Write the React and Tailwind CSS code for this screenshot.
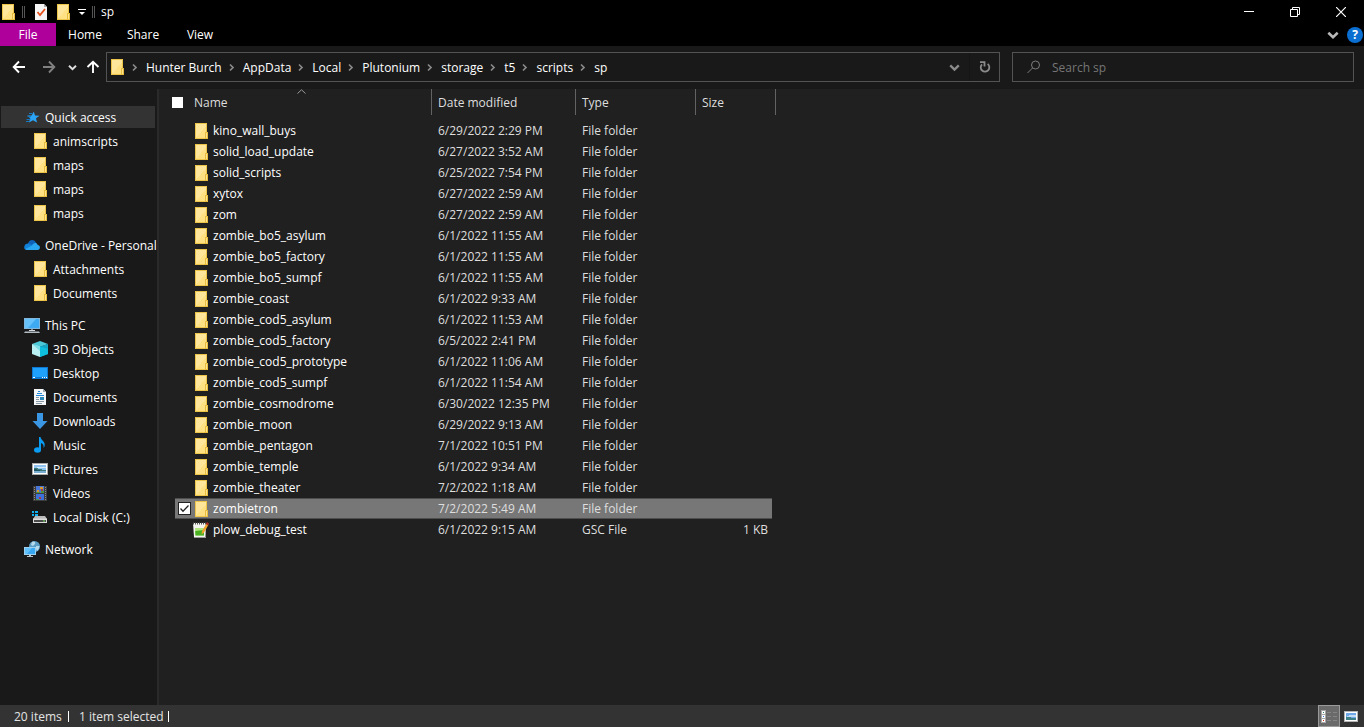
import React, { useState } from "react";

function FolderIcon() {
  return (
    <svg width="16" height="16" viewBox="0 0 16 16" className="shrink-0" shapeRendering="crispEdges" aria-hidden="true">
      <rect x="2" y="0" width="12" height="16" fill="#edc54a" />
      <rect x="3" y="1" width="10" height="14" fill="#ffe69a" />
      <path d="M3 15L13 3V15Z" fill="#ffe082" />
      <rect x="12" y="9" width="3" height="7" fill="#e8bd3f" />
      <rect x="13" y="10" width="1" height="5" fill="#ffe48f" />
    </svg>
  );
}

function CheckedPageIcon() {
  return (
    <svg width="16" height="16" viewBox="0 0 16 16" className="shrink-0" aria-hidden="true">
      <path d="M2 0H11L14 3V16H2Z" fill="#f5f5f5" />
      <path d="M11 0V3H14Z" fill="#a8a8a8" />
      <path d="M4.500 8L7 11L12 5" fill="none" stroke="#e8501c" strokeWidth="1.800" />
    </svg>
  );
}

function StarIcon() {
  return (
    <svg width="16" height="16" viewBox="0 0 16 16" className="shrink-0" aria-hidden="true">
      <path d="M9.800 2.500L11 6.600L15.600 6.800L12 9.300L13 13.600L9 11.200L5 13.600L6.200 9.300L3.200 6.600L7.600 6.400Z" fill="#2ba4f5" />
      <path d="M5 4.500H8M3.500 7.500H7M2.500 10.500H6.500M2 12.500H5" stroke="#1479c4" strokeWidth="1" />
    </svg>
  );
}

function CloudIcon() {
  return (
    <svg width="16" height="16" viewBox="0 0 16 16" className="shrink-0" aria-hidden="true">
      <path d="M4 7C4.600 2.200 10.500 1.600 12.200 6L9 11L2 10Z" fill="#0f62b8" />
      <path d="M.2 10.500C0 7 4.200 5.200 6.500 7.500L10 9L5 13H3C1.200 13 .2 12 .2 10.500Z" fill="#1180d8" />
      <path d="M8 8.500C9 5.600 13 5 13.600 8C16.800 8.200 16.600 13 13.500 13H3.500C2.600 13 1.800 12.600 1.200 12Z" fill="#2aa5ef" />
    </svg>
  );
}

function PcIcon() {
  return (
    <svg width="16" height="16" viewBox="0 0 16 16" className="shrink-0" aria-hidden="true">
      <rect x="0" y="1" width="16" height="11" fill="#7fb8dc" />
      <rect x="1" y="2" width="14" height="9" fill="#3eaaf2" />
      <path d="M1 2H12L4 11H1Z" fill="#68c2fa" />
      <rect x="7" y="12" width="2" height="1" fill="#7b8a96" />
      <path d="M5 13H11V14H5Z" fill="#d3dce3" />
      <path d="M1 14.500H15L16 16H0Z" fill="#b3bcc3" />
    </svg>
  );
}

function CubeIcon() {
  return (
    <svg width="16" height="16" viewBox="0 0 16 16" className="shrink-0" aria-hidden="true">
      <path d="M0 3L8 0L16 3L8 6Z" fill="#4cc9d8" />
      <path d="M0 3L8 5.500V16L0 13Z" fill="#b9f0f3" />
      <path d="M16 3L8 5.500V16L16 13Z" fill="#16a5c4" />
      <path d="M8 5.500L16 8V13L8 16Z" fill="#0fc0de" />
      <path d="M0 3L8 5.500V10Z" fill="#7be0ea" />
    </svg>
  );
}

function DesktopIcon() {
  return (
    <svg width="16" height="16" viewBox="0 0 16 16" className="shrink-0" shapeRendering="crispEdges" aria-hidden="true">
      <rect x="0" y="2" width="16" height="12" fill="#0d79d0" />
      <rect x="1" y="3" width="14" height="9" fill="#1fa0fb" />
      <path d="M1 12h2v1H1zM10 12h1v1h-1zM12 12h1v1h-1zM14 12h1v1h-1z" fill="#fff" />
    </svg>
  );
}

function DocumentsIcon() {
  return (
    <svg width="16" height="16" viewBox="0 0 16 16" className="shrink-0" shapeRendering="crispEdges" aria-hidden="true">
      <path d="M2 0H12L14 3V16H2Z" fill="#f4f6f8" />
      <path d="M11 0V3H14Z" fill="#9aa5ad" />
      <path d="M6 2h2v1H6zM5 4h5v1H5zM4 6h5v1H4zM9 6h3v1H9z" fill="#2189d8" />
      <path d="M4 8h3v1H4zM4 10h3v1H4zM4 12h8v1H4zM4 14h6v1H4z" fill="#8797a3" />
      <rect x="8" y="8" width="4" height="3" fill="#2c86b8" />
    </svg>
  );
}

function DownloadIcon() {
  return (
    <svg width="16" height="16" viewBox="0 0 16 16" className="shrink-0" aria-hidden="true">
      <path d="M5 0H11V8H15.500L8 16L.5 8H5Z" fill="#3b97e3" />
    </svg>
  );
}

function MusicIcon() {
  return (
    <svg width="16" height="16" viewBox="0 0 16 16" className="shrink-0" aria-hidden="true">
      <ellipse cx="5.500" cy="13" rx="3.500" ry="2.700" fill="#0a9bf2" />
      <path d="M7 0H8.500C9 3.500 14 4.500 12.500 9.500L11.500 11C12 7.500 10.500 6.500 9 6V13H7Z" fill="#0a9bf2" />
    </svg>
  );
}

function PictureIcon() {
  return (
    <svg width="16" height="16" viewBox="0 0 16 16" className="shrink-0" shapeRendering="crispEdges" aria-hidden="true">
      <rect x="0" y="2" width="16" height="12" fill="#a9a9a9" />
      <rect x="1" y="3" width="14" height="10" fill="#fff" />
      <rect x="2" y="4" width="12" height="8" fill="#8fc4f0" />
      <path d="M5 6h9v1H5z" fill="#d5e8f7" />
      <path d="M2 7h4v1h4v1h4v1H2z" fill="#3c7a7a" />
      <path d="M2 8h3v1h3v1H2z" fill="#1f5560" />
      <rect x="2" y="10" width="12" height="2" fill="#79aed2" />
    </svg>
  );
}

function VideoIcon() {
  return (
    <svg width="16" height="16" viewBox="0 0 16 16" className="shrink-0" shapeRendering="crispEdges" aria-hidden="true">
      <rect x="1" y="1" width="14" height="15" fill="#3d3d3d" />
      <path d="M2.500 2V16M13.500 2V16" stroke="#8b8b8b" strokeWidth="1" strokeDasharray="1 1" />
      <rect x="4" y="1" width="8" height="7" fill="#4a76d6" />
      <rect x="4" y="9" width="8" height="6" fill="#3f6fd8" />
      <path d="M8 2h3v2H8zM5 5h2v2H5z" fill="#d99a2a" />
      <path d="M9 4h2v2H9zM7 12h2v2H7z" fill="#b03a35" />
      <path d="M4 7h4v1H4zM9 6h3v2H9zM4 14h3v1H4z" fill="#49963c" />
    </svg>
  );
}

function DiskIcon() {
  return (
    <svg width="16" height="16" viewBox="0 0 16 16" className="shrink-0" aria-hidden="true">
      <path d="M0 2h2v2H0zM3 2h3v2H3zM0 5h2v2H0zM3 5h3v3H3z" fill="#12b3f0" />
      <path d="M3 7H13L15 10H1Z" fill="#b9b9b9" />
      <rect x="1" y="9.500" width="14" height="4.500" fill="#dcdcdc" />
      <rect x="2" y="11" width="12" height="2" fill="#4b4b4b" />
      <rect x="11" y="11.500" width="2" height="1" fill="#6fe05a" />
    </svg>
  );
}

function NetworkIcon() {
  return (
    <svg width="16" height="16" viewBox="0 0 16 16" className="shrink-0" aria-hidden="true">
      <circle cx="10.500" cy="5.500" r="5.500" fill="#5b9cc4" />
      <path d="M8 1C10 0 12 1 11 3L9 5L7 4ZM12 5L15.500 5C15.500 7 14 9.500 13 10L12 8Z" fill="#b5d9ec" />
      <rect x="0" y="6" width="12" height="8" fill="#9fd0ee" />
      <rect x="1" y="7" width="10" height="6" fill="#38a8f2" />
      <path d="M1 7H8L3 13H1Z" fill="#62c0fa" />
      <path d="M5 14H7V15H9V16H3V15H5Z" fill="#b9c4cc" />
    </svg>
  );
}

function ScriptFileIcon() {
  return (
    <svg width="16" height="16" viewBox="0 0 16 16" className="shrink-0" aria-hidden="true">
      <path d="M0 1H13L12.500 15H1Z" fill="#f4f4f0" />
      <path d="M1 15H13V16H1Z" fill="#999" />
      <path d="M0 1.500H13" stroke="#555" strokeWidth="2" strokeDasharray="1 1" />
      <path d="M2 6H11V13.500H2.500Z" fill="#b4e680" />
      <path d="M2.200 9L11 8V13.500H2.500Z" fill="#49b022" />
      <path d="M8.500 12.500L9 9L13.500 1.500L15.500 2.800L11 10.500Z" fill="#eda32c" />
      <path d="M13 2L14 0L16 1.500L15 3.500Z" fill="#a82a25" />
    </svg>
  );
}

function Chevron({ className, size = 9 }) {
  return (
    <svg width={size} height={size} viewBox="0 0 9 9" className={className} aria-hidden="true">
      <path d="M1 2.800L4.500 6.200L8 2.800" fill="none" stroke="currentColor" strokeWidth="1.900" />
    </svg>
  );
}

const groups = [
  { label: "Quick access", Icon: StarIcon, active: true, items: [
    ["animscripts", FolderIcon], ["maps", FolderIcon], ["maps", FolderIcon], ["maps", FolderIcon],
  ] },
  { label: "OneDrive - Personal", Icon: CloudIcon, items: [
    ["Attachments", FolderIcon], ["Documents", FolderIcon],
  ] },
  { label: "This PC", Icon: PcIcon, items: [
    ["3D Objects", CubeIcon], ["Desktop", DesktopIcon], ["Documents", DocumentsIcon],
    ["Downloads", DownloadIcon], ["Music", MusicIcon], ["Pictures", PictureIcon],
    ["Videos", VideoIcon], ["Local Disk (C:)", DiskIcon],
  ] },
  { label: "Network", Icon: NetworkIcon, items: [] },
];

const crumbs = ["Hunter Burch", "AppData", "Local", "Plutonium", "storage", "t5", "scripts", "sp"];

const files = [
  ["kino_wall_buys", "6/29/2022 2:29 PM"],
  ["solid_load_update", "6/27/2022 3:52 AM"],
  ["solid_scripts", "6/25/2022 7:54 PM"],
  ["xytox", "6/27/2022 2:59 AM"],
  ["zom", "6/27/2022 2:59 AM"],
  ["zombie_bo5_asylum", "6/1/2022 11:55 AM"],
  ["zombie_bo5_factory", "6/1/2022 11:55 AM"],
  ["zombie_bo5_sumpf", "6/1/2022 11:55 AM"],
  ["zombie_coast", "6/1/2022 9:33 AM"],
  ["zombie_cod5_asylum", "6/1/2022 11:53 AM"],
  ["zombie_cod5_factory", "6/5/2022 2:41 PM"],
  ["zombie_cod5_prototype", "6/1/2022 11:06 AM"],
  ["zombie_cod5_sumpf", "6/1/2022 11:54 AM"],
  ["zombie_cosmodrome", "6/30/2022 12:35 PM"],
  ["zombie_moon", "6/29/2022 9:13 AM"],
  ["zombie_pentagon", "7/1/2022 10:51 PM"],
  ["zombie_temple", "6/1/2022 9:34 AM"],
  ["zombie_theater", "7/2/2022 1:18 AM"],
  ["zombietron", "7/2/2022 5:49 AM"],
  ["plow_debug_test", "6/1/2022 9:15 AM", "GSC File", "1 KB"],
];

function TitleBar() {
  return (
    <header className="flex h-[23px] items-center bg-black">
      <FolderIcon />
      <span className="ml-1.5 h-3 w-[3px] border-x border-[#555]" />
      <button aria-label="Properties" className="ml-2"><CheckedPageIcon /></button>
      <button aria-label="New folder" className="ml-1.5"><FolderIcon /></button>
      <button aria-label="Customize toolbar" className="ml-[7px]">
        <svg width="8" height="8" viewBox="0 0 8 8" aria-hidden="true">
          <path d="M0 1.500H8" stroke="#fff" strokeWidth="1" />
          <path d="M1 4H7L4 7Z" fill="#fff" />
        </svg>
      </button>
      <span className="ml-1.5 h-3 w-[3px] border-x border-[#555]" />
      <h1 className="ml-1.5">sp</h1>
      <div className="ml-auto flex h-full">
        <button aria-label="Minimize" className="flex w-[46px] items-center justify-center">
          <svg width="10" height="10" viewBox="0 0 10 10" aria-hidden="true"><path d="M0 4.500H10" stroke="#fff" /></svg>
        </button>
        <button aria-label="Restore" className="flex w-[46px] items-center justify-center">
          <svg width="10" height="10" viewBox="0 0 10 10" fill="none" stroke="#fff" aria-hidden="true">
            <path d="M.5 2.500H7.500V9.500H.5Z" />
            <path d="M2.500 2.500V.5H9.500V7.500H7.500" />
          </svg>
        </button>
        <button aria-label="Close" className="flex w-[46px] items-center justify-center">
          <svg width="10" height="10" viewBox="0 0 10 10" aria-hidden="true"><path d="M0 0L10 10M10 0L0 10" stroke="#fff" strokeWidth="1.200" /></svg>
        </button>
      </div>
    </header>
  );
}

function Ribbon() {
  return (
    <div className="flex h-[23px] bg-black">
      <button className="w-14 bg-[#b0009c]">File</button>
      <button className="w-[58px]">Home</button>
      <button className="w-[58px]">Share</button>
      <button className="w-[56px]">View</button>
      <div className="ml-auto flex items-center gap-2">
        <button aria-label="Expand the ribbon"><Chevron size={12} className="text-[#b8b8b8]" /></button>
        <button aria-label="Help" className="mr-px flex size-4 items-center justify-center rounded-full bg-[#0a6fd0] text-[12px] leading-none font-bold">?</button>
      </div>
    </div>
  );
}

function AddressRow() {
  return (
    <nav className="flex h-[43px] items-start bg-[#191919] pt-1.5 pr-2.5">
      <div className="flex h-[30px] w-[106px] shrink-0 items-center pl-3">
        <button aria-label="Back">
          <svg width="14" height="14" viewBox="0 0 14 14" fill="none" stroke="#fff" strokeWidth="1.900" aria-hidden="true"><path d="M13 7H2M7 1.500L1.700 7L7 12.500" /></svg>
        </button>
        <button aria-label="Forward" className="ml-4">
          <svg width="14" height="14" viewBox="0 0 14 14" fill="none" stroke="#808080" strokeWidth="1.900" aria-hidden="true"><path d="M1 7H12M7 1.500L12.300 7L7 12.500" /></svg>
        </button>
        <button aria-label="Recent locations" className="ml-3"><Chevron className="text-[#e0e0e0]" /></button>
        <button aria-label="Up" className="ml-[9px]">
          <svg width="14" height="14" viewBox="0 0 14 14" fill="none" stroke="#fff" strokeWidth="1.900" aria-hidden="true"><path d="M7 13V2M1.500 7L7 1.700L12.500 7" /></svg>
        </button>
      </div>
      <div className="flex h-[30px] min-w-0 flex-1 items-center border border-[#535353] pl-0.5">
        <FolderIcon />
        <ol className="flex items-center">
          {crumbs.map((name) => (
            <li key={name} className="flex items-center">
              <svg width="21" height="9" viewBox="0 0 21 9" className="text-[#8a8a8a]" aria-hidden="true">
                <path d="M8 1.500L11 4.500L8 7.500" fill="none" stroke="currentColor" strokeWidth="1.700" />
              </svg>
              <a href="#" className="whitespace-nowrap">{name}</a>
            </li>
          ))}
        </ol>
        <button aria-label="Previous locations" className="ml-auto flex w-[30px] justify-center"><Chevron size={11} className="text-[#8a8a8a]" /></button>
        <button aria-label="Refresh" className="flex h-full w-[30px] items-center justify-center border-l border-[#151515]">
          <svg width="12" height="12" viewBox="0 0 12 12" aria-hidden="true">
            <path d="M8.600 2.900A4.300 4.300 0 1 1 3 3.300" fill="none" stroke="#8a8a8a" strokeWidth="1.800" />
            <path d="M1 1.200H5.500V5.500" fill="none" stroke="#8a8a8a" strokeWidth="1.800" />
          </svg>
        </button>
      </div>
      <label className="ml-3 flex h-[30px] w-[342px] items-center border border-[#535353] pl-3.5">
        <svg width="14" height="14" viewBox="0 0 14 14" fill="none" stroke="#7c7c7c" aria-hidden="true">
          <circle cx="8.500" cy="5" r="4" />
          <path d="M5.500 8L.5 13" />
        </svg>
        <input type="search" aria-label="Search sp" placeholder="Search sp" className="ml-[11px] min-w-0 flex-1 bg-transparent outline-none placeholder:text-[#767676]" />
      </label>
    </nav>
  );
}

function Sidebar() {
  return (
    <aside className="flex w-[159px] shrink-0 flex-col gap-2 border-r-2 border-[#2a2a2a] bg-[#191919] pt-4">
      {groups.map(({ label, Icon, active, items }) => (
        <section key={label}>
          <a href="#" className={`mr-0.5 ml-px flex h-6 items-center gap-[5px] border-y border-[#191919] pl-[23px] whitespace-nowrap ${active ? "bg-[#333]" : ""}`}>
            <Icon />
            {label}
          </a>
          <ul>
            {items.map(([name, ItemIcon], i) => (
              <li key={i}>
                <a href="#" className="flex h-6 items-center gap-[5px] pl-8 whitespace-nowrap">
                  <ItemIcon />
                  {name}
                </a>
              </li>
            ))}
          </ul>
        </section>
      ))}
    </aside>
  );
}

function FileTable({ selected, onSelect }) {
  return (
    <main className="min-w-0 flex-1 bg-[#202020] pl-3">
      <table className="w-[605px] table-fixed border-separate border-spacing-0 text-left">
        <colgroup>
          <col className="w-[22px]" />
          <col className="w-[239px]" />
          <col className="w-[144px]" />
          <col className="w-[120px]" />
          <col className="w-[80px]" />
        </colgroup>
        <thead className="text-[#dedede]">
          <tr className="h-[26px]">
            <th className="pl-px">
              <input type="checkbox" aria-label="Select all" className="block size-[11px] appearance-none bg-white" />
            </th>
            <th className="relative border-r border-[#636363] pl-px font-normal">
              Name
              <svg width="9" height="5" viewBox="0 0 9 5" className="absolute top-0 left-[104px]" aria-hidden="true">
                <path d="M.5 4.500L4.500 .8L8.500 4.500" fill="none" stroke="#9a9a9a" />
              </svg>
            </th>
            <th className="border-r border-[#636363] pl-1.5 font-normal">Date modified</th>
            <th className="border-r border-[#636363] pl-1.5 font-normal">Type</th>
            <th className="border-r border-[#636363] pl-1.5 font-normal">Size</th>
          </tr>
        </thead>
        <tbody className="before:block before:h-[5px]">
          {files.map(([name, date, type = "File folder", size]) => {
            const on = name === selected;
            const fill = on ? "bg-[#777] bg-clip-padding shadow-[inset_0_1px_#4e4e4e,inset_0_-1px_#4e4e4e]" : "";
            return (
              <tr key={name} className="h-[21px] text-[#dedede]">
                <td className={`border-l-4 border-transparent pl-[3px] ${fill}`}>
                  <span className="relative block size-[13px]">
                    <input
                      id={name}
                      type="checkbox"
                      checked={on}
                      onChange={() => onSelect(on ? null : name)}
                      className="peer block size-full appearance-none border border-[#222] bg-white opacity-0 checked:opacity-100 hover:opacity-100"
                    />
                    <svg width="13" height="13" viewBox="0 0 13 13" className="pointer-events-none absolute inset-0 hidden peer-checked:block" aria-hidden="true">
                      <path d="M2.500 6.500L5 9.200L10.500 3.500" fill="none" stroke="#222" strokeWidth="1.300" />
                    </svg>
                  </span>
                </td>
                <td className={fill}>
                  <label htmlFor={name} className="flex items-center gap-1 text-white">
                    {size ? <ScriptFileIcon /> : <FolderIcon />}
                    {name}
                  </label>
                </td>
                <td className={`pl-1.5 ${fill}`}>{date}</td>
                <td className={`pl-1.5 ${fill}`}>{type}</td>
                <td className={`border-r-4 border-transparent pr-1 text-right ${fill}`}>{size}</td>
              </tr>
            );
          })}
        </tbody>
      </table>
    </main>
  );
}

function StatusBar({ count }) {
  return (
    <footer className="flex h-[22px] items-center bg-[#333] pl-3.5 text-[#e4e4e4]">
      <span className="w-[54px]">{files.length} items</span>
      <span className="h-[11px] w-px bg-white" />
      <span className="w-[99px] pl-2.5 whitespace-nowrap">{count ? "1 item selected" : ""}</span>
      <span className="h-[11px] w-px bg-white" />
      <button aria-label="Details view" className="ml-auto flex h-full w-[22px] items-center justify-center border border-[#9a9a9a] bg-[#6a6a6a]">
        <svg width="16" height="13" viewBox="0 0 16 13" shapeRendering="crispEdges" className="shrink-0" aria-hidden="true">
          <path d="M0 0h5v13H0z" fill="#a8a8a8" />
          <path d="M1 1h3v3H1zM1 5h3v3H1zM1 9h3v3H1z" fill="#fff" />
          <path d="M2 2h1v1H2z" fill="#36805a" />
          <path d="M2 6h1v1H2z" fill="#2a7ad8" />
          <path d="M2 10h1v1H2z" fill="#d02a18" />
          <path d="M6 2h4v1H6zM12 2h4v1h-4zM6 6h4v1H6zM12 6h4v1h-4zM6 10h4v1H6zM12 10h4v1h-4z" fill="#858585" />
        </svg>
      </button>
      <button aria-label="Large icons view" className="flex w-6 pl-1">
        <svg width="14" height="11" viewBox="0 0 14 11" shapeRendering="crispEdges" className="shrink-0" aria-hidden="true">
          <rect width="14" height="11" fill="#b5b5b5" />
          <rect x="1" y="1" width="12" height="9" fill="#fff" />
          <rect x="2" y="2" width="10" height="7" fill="#6fa8e8" />
          <path d="M5 4h7v1H5zM3 5h9v1H3z" fill="#c4dcf4" />
          <path d="M2 6h5v1h5v2H2z" fill="#3f7f86" />
        </svg>
      </button>
    </footer>
  );
}

export default function App() {
  const [selected, setSelected] = useState("zombietron");
  return (
    <div className="flex min-h-screen flex-col bg-[#191919] font-['Open_Sans','Noto_Sans',sans-serif] text-[12px] leading-[17px] text-white">
      <TitleBar />
      <Ribbon />
      <AddressRow />
      <div className="flex flex-1">
        <Sidebar />
        <FileTable selected={selected} onSelect={setSelected} />
      </div>
      <StatusBar count={selected ? 1 : 0} />
    </div>
  );
}
